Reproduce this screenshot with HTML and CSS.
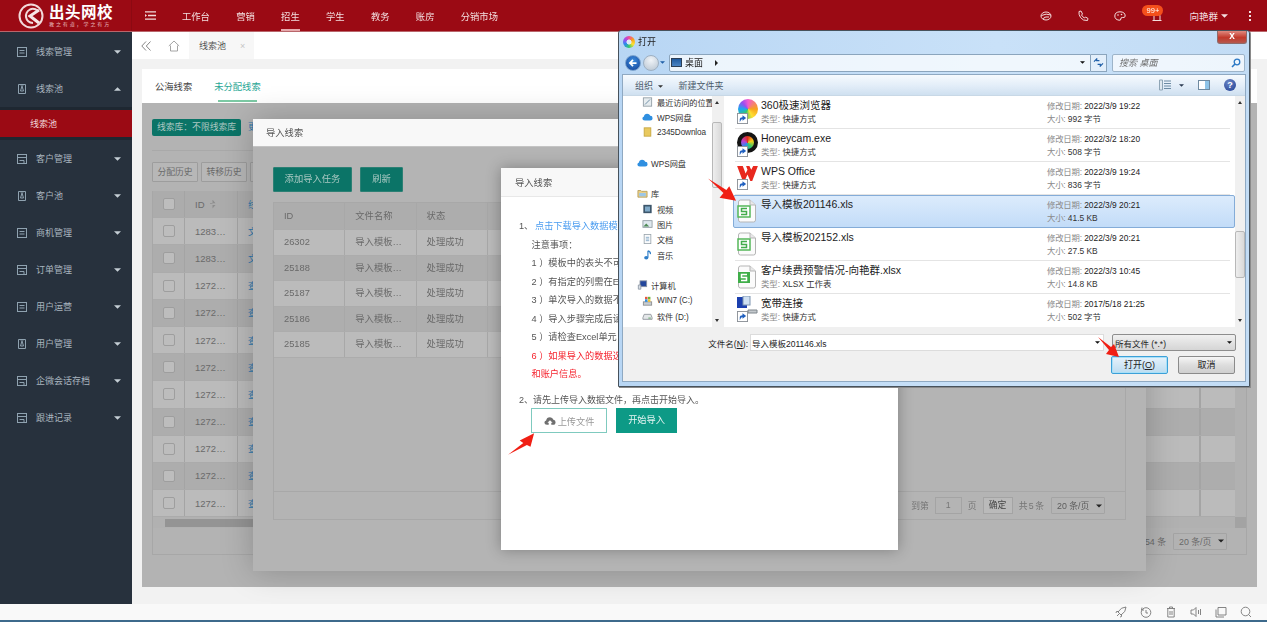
FILE: index.html
```html
<!DOCTYPE html>
<html lang="zh-CN">
<head>
<meta charset="utf-8">
<title>线索池</title>
<link rel="stylesheet" href="styles.css">
</head>
<body>
<svg class="defs" width="0" height="0" aria-hidden="true">
  <symbol id="sc" viewBox="0 0 12 12"><rect x=".5" y=".5" width="11" height="11" fill="#fff" stroke="#8a8f96"/><path d="M3 10 V6.500 Q3 4.500 6 4.500 V2.500 L10 5.500 L6 8.500 V6.500 Q4.500 6.500 3 10Z" fill="#1f5fbf"/></symbol>
  <symbol id="xls" viewBox="0 0 20 24"><path d="M1.500 3 Q1.500 1 3.500 1 H13 L18.500 6 V21 Q18.500 23 16.500 23 H3.500 Q1.500 23 1.500 21Z" fill="#fbfbfb" stroke="#b5b5b5"/><path d="M13 1 V6 H18.500" fill="#e8e8e8" stroke="#b5b5b5"/><rect x="1" y="7" width="12" height="11" fill="#fff" stroke="#55b85a" stroke-width="1.500"/><path d="M10 9.500 H4.500 V12.500 H9.500 V15.500 H4" fill="none" stroke="#44ad4c" stroke-width="1.500"/></symbol>
  <symbol id="xlsx" viewBox="0 0 20 24"><path d="M1.500 3 Q1.500 1 3.500 1 H13 L18.500 6 V21 Q18.500 23 16.500 23 H3.500 Q1.500 23 1.500 21Z" fill="#fbfbfb" stroke="#b5b5b5"/><path d="M13 1 V6 H18.500" fill="#e8e8e8" stroke="#b5b5b5"/><rect x="1" y="7" width="12" height="11" fill="#3fae49"/><path d="M10 9.500 H4.500 V12.500 H9.500 V15.500 H4" fill="none" stroke="#fff" stroke-width="1.500"/></symbol>
  <symbol id="cloud" viewBox="0 0 14 10"><path d="M3.500 9.500 Q.5 9.500 .5 7 Q.5 5 2.500 4.500 Q3 1 6.500 1 Q9.500 1 10.500 3.500 Q13.500 3.500 13.500 6.500 Q13.500 9.500 10.500 9.500Z" fill="#2f8fe0"/></symbol>
  <symbol id="caret" viewBox="0 0 8 4"><path d="M0 0 H8 L4 4Z" fill="currentColor"/></symbol>
  <symbol id="sideicon" viewBox="0 0 10 10"><rect x=".5" y=".5" width="9" height="9" fill="none" stroke="currentColor"/><path d="M2.500 3.500 H7.500 M2.500 6 H7.500" stroke="currentColor"/></symbol>
  <symbol id="sideicon2" viewBox="0 0 10 10"><path d="M1.500 .5 H8.500 V9.500 H1.500Z" fill="none" stroke="currentColor"/><path d="M5 2 L3.500 7 H6.500Z M3.500 1 H6.500" fill="none" stroke="currentColor"/></symbol>
  <symbol id="sideicon3" viewBox="0 0 10 10"><rect x=".5" y=".5" width="9" height="9" fill="none" stroke="currentColor"/><path d="M.5 3.500 H9.500 M2.500 6.500 H7 M7 6.500 V9" stroke="currentColor" fill="none"/></symbol>
</svg>

<div class="app">
  <header class="topbar">
    <div class="logo">
      <svg class="logo-mark" viewBox="0 0 26 26"><circle cx="13" cy="13" r="11.500" fill="none" stroke="#f2d9da" stroke-width="2"/><path d="M20 8 Q16 4.500 12 6.500 Q7.500 9 8 14 Q9 19.500 15 20" fill="none" stroke="#f2d9da" stroke-width="2"/><path d="M21 7 L12 13 L21 20" fill="none" stroke="#f7e6e6" stroke-width="3"/></svg>
      <div class="logo-text"><strong>出头网校</strong><span>教之有道，学之有方</span></div>
    </div>
    <svg class="burger" viewBox="0 0 11 9"><path d="M0 .8 H11 M3 4.500 H11 M0 8.200 H11" stroke="#f2dcdc" stroke-width="1.300"/><path d="M0 3 L2 4.500 L0 6Z" fill="#f2dcdc"/></svg>
    <nav class="topnav">
      <a>工作台</a><a>营销</a><a class="on">招生</a><a>学生</a><a>教务</a><a>账房</a><a>分销市场</a>
    </nav>
    <div class="top-right">
      <svg class="ti t1" viewBox="0 0 12 10"><ellipse cx="6" cy="5" rx="5" ry="4" fill="none" stroke="#f4dede"/><path d="M1.500 4.500 Q6 2 11 4 M3.500 8 Q3.500 6 6 6 H9" fill="none" stroke="#f4dede"/></svg>
      <svg class="ti t2" viewBox="0 0 12 12"><path d="M2 1.500 L4 1 L5.500 4 L4.500 5 Q5.500 7 7.500 8 L8.500 7 L11 8.500 L10.500 10.500 Q6 11 3.500 7.500 Q1.500 4.500 2 1.500Z" fill="none" stroke="#f4dede"/></svg>
      <svg class="ti t3" viewBox="0 0 12 10"><path d="M6 .8 Q11 .8 11.200 5 Q11 7 8.500 6.500 Q6.500 6.500 6.800 8 Q7 9.500 5 9.200 Q.8 8.500 .8 5 Q1 .8 6 .8Z" fill="none" stroke="#f4dede"/><circle cx="4" cy="4" r=".8" fill="#f4dede"/><circle cx="7.500" cy="3.500" r=".8" fill="#f4dede"/></svg>
      <div class="bell-wrap">
        <svg class="ti t4" viewBox="0 0 12 12"><path d="M3 9 V5 Q3 2 6 2 Q9 2 9 5 V9 M1.500 9.500 H10.500" fill="none" stroke="#f4dede"/></svg>
        <span class="badge">99+</span>
      </div>
      <span class="uname">向艳群</span>
      <svg class="ucaret"><use href="#caret"/></svg>
      <span class="kebab"><i></i><i></i><i></i></span>
    </div>
  </header>

  <div class="shell">
    <aside class="sidebar">
      <a class="side"><svg class="si"><use href="#sideicon"/></svg><span>线索管理</span><svg class="sc"><use href="#caret"/></svg></a>
      <a class="side"><svg class="si"><use href="#sideicon2"/></svg><span>线索池</span><svg class="sc up"><use href="#caret"/></svg></a>
      <div class="sub"><a>线索池</a></div>
      <a class="side"><svg class="si"><use href="#sideicon3"/></svg><span>客户管理</span><svg class="sc"><use href="#caret"/></svg></a>
      <a class="side"><svg class="si"><use href="#sideicon2"/></svg><span>客户池</span><svg class="sc"><use href="#caret"/></svg></a>
      <a class="side"><svg class="si"><use href="#sideicon"/></svg><span>商机管理</span><svg class="sc"><use href="#caret"/></svg></a>
      <a class="side"><svg class="si"><use href="#sideicon3"/></svg><span>订单管理</span><svg class="sc"><use href="#caret"/></svg></a>
      <a class="side"><svg class="si"><use href="#sideicon"/></svg><span>用户运营</span><svg class="sc"><use href="#caret"/></svg></a>
      <a class="side"><svg class="si"><use href="#sideicon2"/></svg><span>用户管理</span><svg class="sc"><use href="#caret"/></svg></a>
      <a class="side"><svg class="si"><use href="#sideicon3"/></svg><span>企微会话存档</span><svg class="sc"><use href="#caret"/></svg></a>
      <a class="side"><svg class="si"><use href="#sideicon3"/></svg><span>跟进记录</span><svg class="sc"><use href="#caret"/></svg></a>
    </aside>

    <main class="main">
      <div class="tabbar">
        <span class="collapse"><svg viewBox="0 0 10 10"><path d="M5 .5 L.8 5 L5 9.500 M9.500 .5 L5.300 5 L9.500 9.500" fill="none" stroke="#777" stroke-width=".9"/></svg></span>
        <span class="home"><svg viewBox="0 0 12 12"><path d="M.8 6 L6 1 L11.200 6 M2.500 5.500 V11 H9.500 V5.500" fill="none" stroke="#9a9a9a" stroke-width=".9"/></svg></span>
        <span class="tab">线索池<em>×</em></span>
      </div>
      <div class="content">
        <div class="subtabs"><a>公海线索</a><a class="on">未分配线索</a></div>
        <div class="dim">
          <div class="tagrow"><span class="tag">线索库：不限线索库</span><span class="more">更</span></div>
          <div class="btnrow"><span class="gbtn">分配历史</span><span class="gbtn">转移历史</span><span class="gbtn"></span></div>
          <div class="otable">
            <div class="ogrid">
              <div class="orows">
                <div class="orow head"><span class="cb"><i></i></span><span class="oid">ID <b class="sort"></b></span><span class="olink">线</span><span class="ofix"></span></div>
                <div class="orow"><span class="cb"><i></i></span><span class="oid">1283…</span><span class="olink">文</span><span class="ofix"></span></div>
                <div class="orow alt"><span class="cb"><i></i></span><span class="oid">1283…</span><span class="olink">文</span><span class="ofix"></span></div>
                <div class="orow"><span class="cb"><i></i></span><span class="oid">1272…</span><span class="olink">查</span><span class="ofix"></span></div>
                <div class="orow alt"><span class="cb"><i></i></span><span class="oid">1272…</span><span class="olink">查</span><span class="ofix"></span></div>
                <div class="orow"><span class="cb"><i></i></span><span class="oid">1272…</span><span class="olink">查</span><span class="ofix"></span></div>
                <div class="orow alt"><span class="cb"><i></i></span><span class="oid">1272…</span><span class="olink">查</span><span class="ofix"></span></div>
                <div class="orow"><span class="cb"><i></i></span><span class="oid">1272…</span><span class="olink">查</span><span class="ofix"></span></div>
                <div class="orow alt"><span class="cb"><i></i></span><span class="oid">1272…</span><span class="olink">查</span><span class="ofix"></span></div>
                <div class="orow"><span class="cb"><i></i></span><span class="oid">1272…</span><span class="olink">查</span><span class="ofix"></span></div>
                <div class="orow alt"><span class="cb"><i></i></span><span class="oid">1272…</span><span class="olink">查</span><span class="ofix"></span></div>
                <div class="orow"><span class="cb"><i></i></span><span class="oid">1272…</span><span class="olink">查</span><span class="ofix"></span></div>
              </div>
              <div class="ovscroll"><i></i></div>
            </div>
            <div class="ohscroll"><i class="al"></i><b></b><i class="ar"></i></div>
            <div class="opager"><span>54 条</span><span class="gsel">20 条/页<svg><use href="#caret"/></svg></span></div>
          </div>
        </div>
      </div>
    </main>
  </div>

  <footer class="status">
    <svg viewBox="0 0 12 12"><path d="M2 10 L4 8 M3 6 Q6 1 11 1 Q11 6 6 9Z M3.500 5.500 H1.500 L1 7 M6.500 8.500 V10.500 L5 11" fill="none" stroke="#777" stroke-width=".9"/></svg>
    <svg viewBox="0 0 12 12"><circle cx="6" cy="6.500" r="4.800" fill="none" stroke="#777" stroke-width=".9"/><path d="M2 1.500 L1.500 4 H4 M6 4 V7 H8" fill="none" stroke="#777" stroke-width=".9"/></svg>
    <svg viewBox="0 0 12 12"><path d="M2 2.500 H10 M4.500 2.500 V1 H7.500 V2.500 M2.800 2.500 V11 H9.200 V2.500 M5 5 V9 M7 5 V9" fill="none" stroke="#777" stroke-width=".9"/></svg>
    <svg viewBox="0 0 12 12"><path d="M1 4 H3.500 L6 1.500 V10.500 L3.500 8 H1Z M8.500 4 V8 M10.500 3 V9" fill="none" stroke="#777" stroke-width=".9"/></svg>
    <svg viewBox="0 0 12 12"><path d="M3 1.500 H11 V9 H3Z M1 3.500 V11 H9" fill="none" stroke="#777" stroke-width=".9"/></svg>
    <svg viewBox="0 0 12 12"><circle cx="5.500" cy="5.500" r="4.300" fill="none" stroke="#777" stroke-width=".9"/><path d="M8.500 8.500 L11 11" stroke="#777" stroke-width=".9"/></svg>
  </footer>

  <section class="modal-a">
    <div class="ma-head">导入线索</div>
    <div class="ma-body">
      <div class="ma-btns"><span class="dbtn wide">添加导入任务</span><span class="dbtn">刷新</span></div>
      <div class="itable">
        <div class="irow head"><span>ID</span><span>文件名称</span><span>状态</span><span></span></div>
        <div class="irow"><span>26302</span><span>导入模板…</span><span>处理成功</span><span></span></div>
        <div class="irow alt"><span>25188</span><span>导入模板…</span><span>处理成功</span><span></span></div>
        <div class="irow"><span>25187</span><span>导入模板…</span><span>处理成功</span><span></span></div>
        <div class="irow alt"><span>25186</span><span>导入模板…</span><span>处理成功</span><span></span></div>
        <div class="irow"><span>25185</span><span>导入模板…</span><span>处理成功</span><span></span></div>
        <div class="ipager">
          <span class="pchev"></span><span>到第</span><span class="pinput">1</span><span>页</span><span class="pbtn">确定</span><span class="ptotal">共 5 条</span><span class="gsel">20 条/页<svg><use href="#caret"/></svg></span>
        </div>
      </div>
    </div>
  </section>

  <section class="modal-b">
    <div class="mb-head">导入线索</div>
    <div class="mb-body">
      <p class="step"><span class="num">1、</span><a>点击下载导入数据模</a></p>
      <p class="note">注意事项：</p>
      <p class="note">1 ）模板中的表头不可</p>
      <p class="note">2 ）有指定的列需在E</p>
      <p class="note">3 ）单次导入的数据不</p>
      <p class="note">4 ）导入步骤完成后请</p>
      <p class="note">5 ）请检查Excel单元</p>
      <p class="note red">6 ）如果导入的数据选</p>
      <p class="note red">和账户信息。</p>
      <p class="step two"><span class="num">2、</span>请先上传导入数据文件，再点击开始导入。</p>
      <div class="mb-btns">
        <span class="upload"><svg viewBox="0 0 14 11"><path d="M3.500 10 Q.5 10 .5 7.500 Q.5 5.500 2.500 5 Q3 1 7 1 Q10 1 11 4 Q13.500 4 13.500 7 Q13.500 10 10.500 10 H8.500 V7.500 H10 L7 4.500 L4 7.500 H5.500 V10Z" fill="#6f6f6f"/></svg>上传文件</span>
        <span class="start">开始导入</span>
      </div>
    </div>
  </section>

  <section class="win">
    <div class="win-close"><b>x</b></div>
    <div class="win-title">
      <span class="chrome-ic"></span><span>打开</span>
    </div>
    <div class="win-addr">
      <span class="back"><svg viewBox="0 0 16 16"><path d="M12 8 H5 M8 4.500 L4.500 8 L8 11.500" fill="none" stroke="#fff" stroke-width="2"/></svg></span>
      <span class="fwd"></span>
      <svg class="hist"><use href="#caret"/></svg>
      <div class="addr"><span class="pc-ic"></span><span>桌面</span><span class="tri"></span><svg class="addr-c"><use href="#caret"/></svg></div>
      <span class="refresh"><svg viewBox="0 0 12 10"><path d="M1 4 L4 1 V3 H7 M11 6 L8 9 V7 H5" fill="none" stroke="#1f5fa8" stroke-width="1.300"/></svg></span>
      <div class="search"><em>搜索 桌面</em><svg viewBox="0 0 10 10"><circle cx="6" cy="4" r="2.800" fill="none" stroke="#2a78c5" stroke-width="1.300"/><path d="M4 6 L1 9" stroke="#2a78c5" stroke-width="1.600"/></svg></div>
    </div>
    <div class="win-panel">
      <div class="win-tools">
        <span class="org">组织 <svg><use href="#caret"/></svg></span>
        <span>新建文件夹</span>
        <span class="tools-right">
          <svg class="view" viewBox="0 0 12 12"><path d="M.5 1 H3.500 V11 H.5Z" fill="#dfe8ef" stroke="#8ea5b6"/><path d="M5 2 H12 M5 4.500 H12 M5 7 H12 M5 9.500 H12" stroke="#6c8ba3"/></svg>
          <svg class="vc"><use href="#caret"/></svg>
          <svg class="pane" viewBox="0 0 12 10"><rect x=".5" y=".5" width="11" height="9" fill="#fff" stroke="#6f8aa0"/><rect x="7" y="1" width="4" height="8" fill="#8fc4e8"/></svg>
          <span class="help">?</span>
        </span>
      </div>
      <div class="win-panes">
        <div class="navpane">
          <div class="navlist">
            <div class="n2"><svg viewBox="0 0 12 12"><rect x="1" y="1" width="10" height="10" fill="#e6ecef" stroke="#8c98a0"/><path d="M3 9 L9 3" stroke="#5c7f9a"/></svg>最近访问的位置</div>
            <div class="n2"><svg><use href="#cloud"/></svg>WPS网盘</div>
            <div class="n2"><svg viewBox="0 0 12 12"><rect x="2" y="1" width="8" height="10" fill="#e9c95f" stroke="#c4a43d"/></svg>2345Downloa</div>
            <div class="gap"></div>
            <div class="n1"><svg><use href="#cloud"/></svg>WPS网盘</div>
            <div class="gap"></div>
            <div class="n1"><svg viewBox="0 0 12 12"><path d="M.5 3 H4 L5 4 H11.500 V11 H.5Z" fill="#e9cf86" stroke="#b49b58"/><rect x="2" y="6" width="8" height="4" fill="#9cc6e6"/></svg>库</div>
            <div class="n2"><svg viewBox="0 0 12 12"><rect x="1" y="1" width="10" height="10" fill="#3d566b"/><rect x="3" y="3" width="6" height="6" fill="#7fa9c8"/></svg>视频</div>
            <div class="n2"><svg viewBox="0 0 12 12"><rect x=".5" y="2" width="11" height="8" fill="#dfe8ee" stroke="#8c98a0"/><path d="M1 9 L4.500 5.500 L8 9Z" fill="#4d8a55"/></svg>图片</div>
            <div class="n2"><svg viewBox="0 0 12 12"><rect x="2" y=".5" width="8" height="11" fill="#fafbfc" stroke="#9ba6ad"/><path d="M4 4 H8 M4 6 H8 M4 8 H8" stroke="#7da4c4"/></svg>文档</div>
            <div class="n2"><svg viewBox="0 0 12 12"><path d="M6.500 1 V9 M6.500 1 Q10 2 9.500 5" fill="none" stroke="#2f7ec8" stroke-width="1.400"/><ellipse cx="4.500" cy="9.300" rx="2.500" ry="2" fill="#2f7ec8"/></svg>音乐</div>
            <div class="gap"></div>
            <div class="n1"><svg viewBox="0 0 12 12"><rect x="3" y="1" width="8" height="7" fill="#24479c" stroke="#8b95a3"/><path d="M1 6 V11 H4 V6Z" fill="#d9dfe5" stroke="#8b95a3"/></svg>计算机</div>
            <div class="n2"><svg viewBox="0 0 12 12"><rect x="1" y="7" width="10" height="4" fill="#c8ced3" stroke="#888"/><rect x="3" y="1" width="3" height="3" fill="#e9573f"/><rect x="6.500" y="1" width="3" height="3" fill="#6cb33f"/><rect x="3" y="4" width="3" height="3" fill="#2f8fe0"/><rect x="6.500" y="4" width="3" height="3" fill="#f4c430"/></svg>WIN7 (C:)</div>
            <div class="n2"><svg viewBox="0 0 12 12"><path d="M2 4 H10 L11.500 8 V10 H.5 V8Z" fill="#e4e7e9" stroke="#8a9096"/><path d="M7 8.500 H10" stroke="#4c9a50"/></svg>软件 (D:)</div>
          </div>
          <div class="navscroll"><span class="up"></span><b></b><span class="dn"></span></div>
        </div>
        <div class="filelist">
          <div class="files">
            <div class="file"><span class="fic"><span class="ic360"></span><svg class="scut"><use href="#sc"/></svg></span><div class="fname"><strong>360极速浏览器</strong><small><em>类型:</em> 快捷方式</small></div><div class="fmeta"><span><em>修改日期:</em> 2022/3/9 19:22</span><small><em>大小:</em> 992 字节</small></div></div>
            <div class="file"><span class="fic"><span class="ichoney"></span><svg class="scut"><use href="#sc"/></svg></span><div class="fname"><strong>Honeycam.exe</strong><small><em>类型:</em> 快捷方式</small></div><div class="fmeta"><span><em>修改日期:</em> 2022/3/2 18:20</span><small><em>大小:</em> 508 字节</small></div></div>
            <div class="file"><span class="fic"><svg class="icwps" viewBox="0 0 22 18"><path d="M0 1 H6 L9 9 L11 5 L9.500 1 H13 L15 5 L17 1 H22 L16 17 H14 L11 10 L8 17 H6Z" fill="#e8281e"/></svg><svg class="scut"><use href="#sc"/></svg></span><div class="fname"><strong>WPS Office</strong><small><em>类型:</em> 快捷方式</small></div><div class="fmeta"><span><em>修改日期:</em> 2022/3/9 19:24</span><small><em>大小:</em> 836 字节</small></div></div>
            <div class="file sel"><span class="fic"><svg class="icdoc"><use href="#xls"/></svg></span><div class="fname"><strong>导入模板201146.xls</strong></div><div class="fmeta"><span><em>修改日期:</em> 2022/3/9 20:21</span><small><em>大小:</em> 41.5 KB</small></div></div>
            <div class="file"><span class="fic"><svg class="icdoc"><use href="#xls"/></svg></span><div class="fname"><strong>导入模板202152.xls</strong></div><div class="fmeta"><span><em>修改日期:</em> 2022/3/9 20:21</span><small><em>大小:</em> 27.5 KB</small></div></div>
            <div class="file"><span class="fic"><svg class="icdoc"><use href="#xlsx"/></svg></span><div class="fname"><strong>客户续费预警情况-向艳群.xlsx</strong><small><em>类型:</em> XLSX 工作表</small></div><div class="fmeta"><span><em>修改日期:</em> 2022/3/3 10:45</span><small><em>大小:</em> 14.8 KB</small></div></div>
            <div class="file"><span class="fic"><svg class="icnet" viewBox="0 0 22 20"><rect x="1" y="1" width="10" height="11" fill="#1b3fae"/><rect x="7" y="0" width="7" height="9" fill="#cfe0f2" stroke="#7d94b0"/><path d="M12 14 H21 V17 H12Z" fill="#c4c9cd" stroke="#7f868c"/></svg><svg class="scut"><use href="#sc"/></svg></span><div class="fname"><strong>宽带连接</strong><small><em>类型:</em> 快捷方式</small></div><div class="fmeta"><span><em>修改日期:</em> 2017/5/18 21:25</span><small><em>大小:</em> 502 字节</small></div></div>
          </div>
          <div class="filescroll"><span class="up"></span><b></b><span class="dn"></span></div>
        </div>
      </div>
      <div class="win-bottom">
        <div class="wb-row">
          <label>文件名(<u>N</u>):</label>
          <div class="wb-input">导入模板201146.xls<svg><use href="#caret"/></svg></div>
          <div class="wb-select">所有文件 (*.*)<svg><use href="#caret"/></svg></div>
        </div>
        <div class="wb-row btns">
          <span class="wbtn primary">打开(<u>O</u>)</span>
          <span class="wbtn">取消</span>
        </div>
      </div>
    </div>
  </section>

  <svg class="arrow a1" viewBox="0 0 30 24"><path d="M0 0 L19 12 L22 8 L29 23 L12 20 L16 15Z" fill="#f01f14"/></svg>
  <svg class="arrow a2" viewBox="0 0 21 20"><path d="M0 0 L13 10 L16 7 L21 20 L8 17 L11 13Z" fill="#f01f14"/></svg>
  <svg class="arrow a3" viewBox="0 0 30 24"><path d="M0 24 L17 11 L13 8 L29 0 L25 15 L21 13Z" fill="#f01f14"/></svg>
</div>
</body>
</html>
```
FILE: styles.css
```css
* { box-sizing: border-box; }
html, body { margin: 0; height: 100%; overflow: hidden; }
body { font-family: "Liberation Sans", "Noto Sans CJK SC", sans-serif; font-size: 9px; color: #333; background: #f2f2f2; }
.defs { position: absolute; }
p { margin: 0; }
em { font-style: normal; }
.app { position: relative; width: 1267px; height: 622px; display: flex; flex-direction: column; overflow: hidden; filter: blur(.4px); }

/* top bar */
.topbar { height: 32px; flex: none; display: flex; align-items: center; background: #9b0a14; color: #f3dfe0; border-bottom: 1px solid #b9666b; }
.logo { width: 132px; height: 100%; display: flex; align-items: center; padding-left: 18px; gap: 5px; border-right: 1px solid #8c0912; }
.logo-mark { width: 26px; height: 26px; flex: none; }
.logo-text { display: flex; flex-direction: column; color: #fff; line-height: 1; }
.logo-text strong { font-size: 15.500px; letter-spacing: .5px; height: 17px; white-space: nowrap; }
.logo-text span { font-size: 5px; letter-spacing: 1.900px; color: #e7bdbf; white-space: nowrap; }
.burger { width: 11px; height: 9px; margin-left: 13px; }
.topnav { display: flex; height: 100%; gap: 26.300px; margin-left: 26px; align-items: center; font-size: 9.300px; }
.topnav a { display: flex; align-items: center; height: 100%; position: relative; }
.topnav a.on::after { content: ""; position: absolute; left: 0; right: 0; bottom: 0; height: 2px; background: #e6a9ac; }
.top-right { margin-left: auto; display: flex; align-items: center; padding-right: 16px; }
.ti { width: 12px; height: 12px; flex: none; }
.t1 { margin-right: 25px; } .t2 { margin-right: 25px; } .t3 { margin-right: 25px; }
.bell-wrap { position: relative; width: 12px; height: 12px; top: 1px; }
.badge { position: absolute; left: -9px; top: -6px; width: 21px; height: 11px; border-radius: 6px; background: #f4501c; color: #fff; font-size: 7.500px; line-height: 11px; text-align: center; }
.uname { margin-left: 26px; font-size: 9.500px; }
.ucaret { width: 7px; height: 4px; margin-left: 3px; color: #f3dfe0; }
.kebab { display: flex; flex-direction: column; gap: 2px; margin-left: 21px; }
.kebab i { width: 2px; height: 2px; background: #f3dfe0; }

/* shell */
.shell { flex: none; height: 572px; display: flex; }
.sidebar { width: 132px; flex: none; background: #27313d; color: #a9b5bf; padding-top: 1px; }
.side { height: 37px; display: flex; align-items: center; padding-left: 17px; }
.side span { margin-left: 9px; }
.si { width: 10px; height: 10px; color: #8fa2b0; flex: none; }
.sc { width: 7px; height: 4px; margin-left: auto; margin-right: 11px; color: #c5ced5; }
.sc.up { transform: rotate(180deg); }
.sub { background: #1e2731; padding: 3px 0; }
.sub a { display: flex; align-items: center; height: 27px; padding-left: 30px; background: #9b0a14; color: #f0d6d7; }
.main { flex: 1; display: flex; flex-direction: column; min-width: 0; }
.tabbar { height: 27px; flex: none; display: flex; align-items: stretch; background: #fff; }
.collapse { width: 26px; display: flex; align-items: center; justify-content: center; padding-left: 1px; }
.collapse svg { width: 10px; height: 10px; }
.home { width: 31px; display: flex; align-items: center; justify-content: center; }
.home svg { width: 12px; height: 12px; }
.tab { width: 65px; background: #f7f7f7; display: flex; align-items: center; padding-left: 10px; color: #555; }
.tab em { margin-left: 14px; color: #c5c5c5; font-size: 9px; }
.content { flex: 1; display: flex; flex-direction: column; padding: 10px 10px 17px; min-height: 0; }
.subtabs { height: 34px; flex: none; background: #fff; display: flex; padding-left: 13px; gap: 22px; align-items: center; color: #444; }
.subtabs a { position: relative; font-size: 9.300px; }
.subtabs a.on { color: #2ba795; }
.subtabs a.on::after { content: ""; position: absolute; left: 4px; right: 4px; bottom: -9px; height: 2px; background: #7cc9a4; }

/* dimmed page */
.dim { flex: 1; background: #b3b3b3; padding: 16px 10px 0; display: flex; flex-direction: column; color: #6a6a6a; min-height: 0; }
.tagrow { height: 32px; flex: none; border-bottom: 1px solid #a9a9a9; display: flex; align-items: flex-start; gap: 7px; }
.tag { height: 17px; width: 89px; border-radius: 2px; background: #0b7467; color: #adc7c2; text-align: center; line-height: 17px; font-size: 8.800px; white-space: nowrap; }
.more { color: #2d78ad; line-height: 17px; }
.btnrow { display: flex; gap: 3px; margin-top: 11px; flex: none; }
.gbtn { width: 46px; height: 20px; border: 1px solid #9d9d9d; border-radius: 1px; background: #b7b7b7; text-align: center; line-height: 18px; font-size: 8.800px; }
.otable { margin-top: 9px; height: 364px; flex: none; border: 1px solid #a7a7a7; border-top: 0; display: flex; flex-direction: column; }
.ogrid { height: 326px; display: flex; flex: none; }
.orows { flex: 1; min-width: 0; }
.orow { height: 27.200px; display: flex; align-items: stretch; background: #bbb; border-bottom: 1px solid #ababab; }
.orow.alt { background: #adadad; }
.orow.head { background: #acacac; }
.cb { width: 32px; display: flex; align-items: center; justify-content: center; border-right: 1px solid #a4a4a4; }
.cb i { width: 12px; height: 12px; border: 1px solid #9e9e9e; border-radius: 2px; background: #bdbdbd; }
.oid { width: 53px; display: flex; align-items: center; padding-left: 10px; border-right: 1px solid #a4a4a4; font-size: 9.500px; gap: 5px; }
.sort { width: 6px; height: 9px; background: linear-gradient(#8d8d8d 0 40%, transparent 40% 60%, #8d8d8d 60%); clip-path: polygon(50% 0, 100% 40%, 0 40%, 0 60%, 100% 60%, 50% 100%); }
.olink { flex: 1; display: flex; align-items: center; padding-left: 10px; color: #2d78ad; }
.ofix { width: 36px; border-left: 2px solid #a4a4a4; }
.ovscroll { width: 11px; flex: none; background: #b1b1b1; position: relative; }
.ovscroll i { position: absolute; top: 0; left: 0; right: 0; bottom: 12px; background: #b1b1b1; }
.ohscroll { height: 11px; flex: none; display: flex; align-items: center; background: #b1b1b1; }
.ohscroll b { flex: 1; height: 8px; background: #949494; margin: 0 900px 0 0; }
.ohscroll .al { width: 12px; }
.ohscroll .ar { width: 11px; height: 11px; background: #a3a3a3; }
.opager { flex: 1; display: flex; align-items: center; justify-content: flex-end; gap: 7px; padding-right: 19px; font-size: 8.800px; }
.gsel { width: 54px; height: 17px; border: 1px solid #a4a4a4; border-radius: 1px; display: flex; align-items: center; padding-left: 5px; gap: 7px; white-space: nowrap; font-size: 8.800px; }
.gsel svg { width: 6px; height: 4px; color: #222; flex: none; }

/* first modal */
.modal-a { position: absolute; left: 253px; top: 119px; width: 893px; height: 452px; background: #b4b4b4; box-shadow: 0 0 30px rgba(0,0,0,.22); display: flex; flex-direction: column; }
.ma-head { height: 28px; flex: none; background: #f8f8f8; border-bottom: 1px solid #c4c4c4; padding-left: 13px; line-height: 28px; color: #555; font-size: 9.300px; }
.ma-body { flex: 1; padding: 20px 20px 0; display: flex; flex-direction: column; color: #6a6a6a; }
.ma-btns { display: flex; gap: 8px; flex: none; }
.dbtn { height: 25px; width: 43px; background: #0b7467; border: 1px solid #2c8074; border-radius: 1px; color: #a8c8c2; text-align: center; line-height: 23px; font-size: 9.300px; }
.dbtn.wide { width: 79px; }
.itable { margin-top: 10px; height: 318px; border: 1px solid #a8a8a8; display: flex; flex-direction: column; position: relative; font-size: 9.300px; }
.irow { height: 25.500px; flex: none; display: grid; grid-template-columns: repeat(4, 71.300px); background: #bbb; border-bottom: 1px solid #acacac; }
.irow span { padding-left: 10px; line-height: 25px; border-right: 1px solid #a8a8a8; white-space: nowrap; overflow: hidden; }
.irow.alt { background: #aeaeae; }
.irow.head { background: #adadad; height: 27px; }
.irow.head span { line-height: 27px; }
.ipager { margin-top: auto; height: 28px; border-top: 1px solid #a8a8a8; display: flex; align-items: center; justify-content: flex-end; gap: 6px; padding-right: 20px; font-size: 8.800px; color: #757575; }
.pchev { width: 6px; height: 6px; border-top: 1px solid #a0a0a0; border-right: 1px solid #a0a0a0; transform: rotate(45deg); margin-right: 8px; }
.pinput { width: 27px; height: 17px; border: 1px solid #a4a4a4; text-align: center; line-height: 15px; }
.pbtn { width: 30px; height: 17px; border: 1px solid #a4a4a4; background: #bababa; text-align: center; line-height: 15px; color: #444; }
.ptotal { word-spacing: -1px; }
.ipager .gsel { color: #5c5c5c; margin-left: 1px; }

/* second modal */
.modal-b { position: absolute; left: 501px; top: 168px; width: 397px; height: 382px; background: #fff; box-shadow: 0 0 14px rgba(0,0,0,.3); }
.mb-head { height: 29px; background: #f8f8f8; border-bottom: 1px solid #e8e8e8; padding-left: 14px; line-height: 30px; color: #555; font-size: 9.300px; }
.mb-body { padding: 20px 18px 0; color: #555; font-size: 9.200px; }
.mb-body p { height: 18.500px; line-height: 18.500px; white-space: nowrap; }
.num { display: inline-block; width: 16px; }
.step a { color: #4a9cf0; }
.step.two .num { width: 14px; }
.note { padding-left: 12.500px; }
.note.red { color: #f5222d; }
.step.two { margin-top: 7px; font-size: 9px; }
.mb-btns { display: flex; gap: 9px; padding-left: 12px; margin-top: -1px; }
.upload { width: 76px; height: 25px; border: 1px solid #7fcabf; display: flex; align-items: center; justify-content: center; gap: 2px; color: #999; }
.upload svg { width: 12px; height: 10px; }
.start { width: 61px; height: 25px; background: #0d9a86; color: #e9f6f4; text-align: center; line-height: 25px; }

/* windows dialog */
.win { position: absolute; left: 618px; top: 30px; width: 632px; height: 357px; border: 1px solid #47525c; border-radius: 3px 3px 0 0; background: linear-gradient(90deg, #b8d6f4, #c9e1f8 60%, #c2dcf5); box-shadow: 1px 1px 0 #8a8a8a; padding: 0 3px 4px; display: flex; flex-direction: column; font-size: 9px; color: #222; }
.win-close { position: absolute; right: 2px; top: 0; width: 30px; height: 13px; background: linear-gradient(#e08a7f, #c2392b 55%, #b5584e); border: 1px solid #8e6a6a; border-top: 0; border-radius: 0 0 3px 3px; color: #fff; text-align: center; line-height: 9px; font-size: 10px; }
.win-title { height: 21px; flex: none; display: flex; align-items: center; gap: 3px; padding-left: 1px; }
.chrome-ic { width: 12px; height: 12px; flex: none; border-radius: 50%; background: radial-gradient(circle, #dfe9f6 0 28%, transparent 32%), conic-gradient(#f24a9a, #f7a21b, #ffe033, #35c96a, #2a8cf0, #9b4df0, #f24a9a); }
.win-addr { height: 21px; flex: none; display: flex; align-items: center; padding-left: 3px; }
.back { width: 16px; height: 16px; flex: none; border-radius: 50%; background: radial-gradient(circle at 50% 35%, #3e8fe0, #123f94); border: 1px solid #78a0cc; display: flex; }
.fwd { width: 16px; height: 16px; flex: none; margin-left: 2px; border-radius: 50%; background: radial-gradient(circle at 50% 30%, #f0f4f8, #b6c3d0); border: 1px solid #9eb0c2; }
.back svg { width: 100%; height: 100%; }
.hist { width: 5px; height: 3px; margin: 0 4px 0 1px; color: #1f5fa8; flex: none; }
.addr { width: 422px; height: 18px; flex: none; display: flex; align-items: center; background: rgba(255,255,255,.72); border: 1px solid #8ba5bd; border-radius: 2px 0 0 2px; padding-left: 1px; gap: 3px; position: relative; }
.pc-ic { width: 11px; height: 9px; background: linear-gradient(#1f5aa0, #4a84c4); border: 1px solid #2c3e55; }
.tri { width: 0; height: 0; border-left: 3px solid #222; border-top: 3px solid transparent; border-bottom: 3px solid transparent; margin-left: 9px; }
.addr-c { position: absolute; right: 5px; top: 6px; width: 5px; height: 3px; color: #111; }
.refresh { width: 16px; height: 18px; background: rgba(255,255,255,.5); border: 1px solid #8ba5bd; border-left: 0; display: flex; align-items: center; justify-content: center; flex: none; }
.refresh svg { width: 11px; height: 9px; }
.search { width: 133px; height: 18px; margin-left: 5px; flex: none; background: rgba(255,255,255,.72); border: 1px solid #9db4c9; border-radius: 2px; display: flex; align-items: center; padding: 0 3px 0 6px; color: #6d6d6d; }
.search em { font-style: italic; }
.search svg { width: 10px; height: 10px; margin-left: auto; }
.win-panel { flex: 1; margin-top: 1px; min-height: 0; border: 1px solid #8fa9c2; display: flex; flex-direction: column; background: #fff; }
.win-tools { height: 21px; flex: none; display: flex; align-items: center; padding-left: 12px; gap: 16px; color: #4a5a6a; background: linear-gradient(#f6fafe, #e2edf8 55%, #cfe0f0); border-bottom: 1px solid #c8d8e6; }
.org svg { width: 5px; height: 3px; margin-left: 2px; color: #333; vertical-align: middle; }
.tools-right { margin-left: auto; display: flex; align-items: center; padding-right: 9px; }
.view { width: 12px; height: 12px; }
.vc { width: 5px; height: 3px; margin: 0 14px 0 8px; color: #2a3a50; }
.pane { width: 12px; height: 10px; margin-right: 14px; }
.help { width: 12px; height: 12px; border-radius: 50%; background: radial-gradient(circle at 40% 30%, #6b86c6, #1e3d92); color: #fff; font-weight: bold; text-align: center; line-height: 12px; font-size: 9px; }
.win-panes { flex: none; height: 231px; display: flex; }
.navpane { width: 101px; flex: none; display: flex; border-right: 2px solid #f0f0f0; }
.navlist { flex: 1; min-width: 0; overflow: hidden; }
.n1, .n2, .gap { height: 15.300px; white-space: nowrap; display: flex; align-items: center; color: #333; font-size: 8.200px; position: relative; top: -2px; }
.n1 { padding-left: 14px; gap: 3px; }
.n2 { padding-left: 19px; gap: 4px; letter-spacing: -.1px; }
.n1 svg, .n2 svg { width: 11px; height: 10px; flex: none; }
.navscroll, .filescroll { width: 10px; flex: none; background: #f0f0f0; position: relative; }
.navscroll b { position: absolute; left: 0; right: 0; top: 26px; height: 66px; background: linear-gradient(90deg, #eee, #d9d9d9); border: 1px solid #b8b8b8; border-radius: 2px; }
.filescroll b { position: absolute; left: 0; right: 0; top: 135px; height: 47px; background: linear-gradient(90deg, #eee, #d9d9d9); border: 1px solid #b8b8b8; border-radius: 2px; }
.navscroll .up, .filescroll .up { position: absolute; top: 5px; left: 3px; border: 2px solid transparent; border-bottom: 3px solid #333; border-top: 0; }
.navscroll .dn, .filescroll .dn { position: absolute; bottom: 5px; left: 3px; border: 2px solid transparent; border-top: 3px solid #333; border-bottom: 0; }
.filelist { flex: 1; display: flex; min-width: 0; padding-left: 11px; }
.files { flex: 1; min-width: 0; }
.file { height: 33px; display: flex; align-items: flex-start; padding: 2px 0 0 1px; border-bottom: 1px solid #e4e4e4; margin-right: 5px; position: relative; }
.file.sel { background: linear-gradient(#dcebfc, #c2dcf8); border: 1px solid #84acd8; border-radius: 2px; margin: 0 0 0 -2px; padding: 1px 0 0 2px; }
.file:last-child { border-bottom: 0; }
.fic { width: 25px; height: 29px; flex: none; position: relative; display: block; }
.scut { position: absolute; left: 1px; bottom: 3px; width: 11px; height: 11px; }
.ic360 { position: absolute; left: 2px; top: 1px; width: 20px; height: 20px; border-radius: 50%; background: conic-gradient(#f25bd0, #f7a21b 90deg, #ffe033 150deg, #35c96a 210deg, #1ba8f0 270deg, #9b4df0 320deg, #f25bd0); }
.ichoney { position: absolute; left: 1px; top: 1px; width: 21px; height: 21px; border-radius: 50%; background: conic-gradient(#e03020, #f7d01b, #35c96a, #2a8cf0, #c03fd0, #e03020); border: 4.500px solid #141414; }
.icwps { position: absolute; left: 1px; top: 1px; width: 21px; height: 17px; }
.icdoc { position: absolute; left: 1px; top: 2px; width: 20px; height: 24px; }
.icnet { position: absolute; left: 0; top: 0; width: 22px; height: 20px; }
.fname { width: 286px; flex: none; }
.fname strong { display: block; font-weight: normal; font-size: 10.500px; color: #1c1c1c; line-height: 15px; white-space: nowrap; }
.fname small, .fmeta small { display: block; font-size: 8.400px; line-height: 13px; color: #333; white-space: nowrap; }
small em, .fmeta em { color: #8a8a8a; }
.fmeta { font-size: 8.400px; line-height: 13px; color: #222; white-space: nowrap; }
.fmeta em { letter-spacing: -.2px; }
.fmeta span { display: block; margin-top: 2px; }
.win-bottom { flex: 1; background: #f0f0f0; padding-top: 7px; }
.wb-row { display: flex; align-items: center; font-size: 8.500px; }
.wb-row label { width: 127px; text-align: right; padding-right: 2px; }
.wb-input { width: 354px; height: 17px; background: #fff; border: 1px solid #dcdcdc; display: flex; align-items: center; padding-left: 1px; position: relative; }
.wb-input svg, .wb-select svg { position: absolute; right: 3px; top: 6px; width: 5px; height: 3px; color: #111; }
.wb-select { width: 124px; height: 17px; margin-left: 8px; background: linear-gradient(#f0f0f0, #d5d5d5); border: 1px solid #8d8d8d; border-radius: 2px; display: flex; align-items: center; padding-left: 2px; position: relative; }
.wb-row.btns { justify-content: flex-end; gap: 10px; margin-top: 5px; padding-right: 10px; }
.wbtn { width: 57px; height: 18px; text-align: center; line-height: 16px; border: 1px solid #8b8b8b; border-radius: 2px; background: linear-gradient(#f6f6f6, #ddd 50%, #cfcfcf); color: #222; font-size: 9px; }
.wbtn.primary { background: linear-gradient(#e6f2fb, #bcdcf0); border: 1px solid #3ca0d8; box-shadow: inset 0 0 0 1px #a8e0f8; }

/* annotation arrows */
.arrow { position: absolute; }
.a1 { left: 708px; top: 178px; width: 29px; height: 24px; }
.a2 { left: 1098px; top: 337px; width: 21px; height: 20px; }
.a3 { left: 508px; top: 432px; width: 27px; height: 24px; }

/* status strip */
.status { flex: 1; background: #f9f9f9; border-bottom: 2px solid #3d6a8c; display: flex; align-items: center; justify-content: flex-end; gap: 13px; padding-right: 15px; }
.status svg { width: 12px; height: 12px; }
```
